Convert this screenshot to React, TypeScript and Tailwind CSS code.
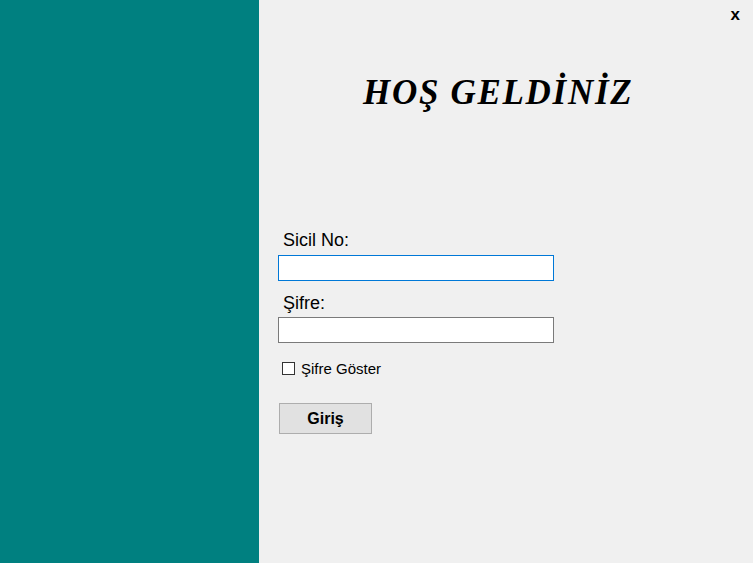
import React, { useState } from 'react';

export default function App() {
  const [sicil, setSicil] = useState('');
  const [sifre, setSifre] = useState('');
  const [goster, setGoster] = useState(false);

  return (
    <div className="flex h-[563px] w-[753px] overflow-hidden bg-[#f0f0f0] font-['Liberation_Sans',Arial,sans-serif] text-black">
      <div className="w-[259px] shrink-0 bg-[#008080]" />
      <div className="relative flex-1">
        <button className="absolute right-[13px] top-[6px] text-[17px] font-bold leading-none">x</button>

        <h1 className="mt-[75px] pl-[104px] font-['Liberation_Serif',serif] text-[35px] font-bold italic leading-none tracking-[1.7px]">
          HOŞ GELDİNİZ
        </h1>

        <div className="mt-[119px] flex flex-col pl-[19px]">
          <label className="pl-[5px] text-[18px] leading-[22px]">Sicil No:</label>
          <input
            autoFocus
            value={sicil}
            onChange={(e) => setSicil(e.target.value)}
            className="mt-[4px] h-[26px] w-[276px] border border-[#0078d7] bg-white px-[2px] text-[15px] outline-none"
          />
          <label className="mt-[11px] pl-[5px] text-[18px] leading-[22px]">Şifre:</label>
          <input
            type={goster ? 'text' : 'password'}
            value={sifre}
            onChange={(e) => setSifre(e.target.value)}
            className="mt-[3px] h-[26px] w-[276px] border border-[#7a7a7a] bg-white px-[2px] text-[15px] outline-none"
          />
          <label className="mt-[18px] flex items-center gap-[6px] pl-[4px] text-[15px] leading-[15px]">
            <span
              onClick={() => setGoster(!goster)}
              className="flex h-[13px] w-[13px] items-center justify-center border border-[#333] bg-white text-[10px]"
            >
              {goster ? '✓' : ''}
            </span>
            <span onClick={() => setGoster(!goster)}>Şifre Göster</span>
          </label>
          <button className="ml-[1px] mt-[27px] h-[31px] w-[93px] border border-[#adadad] bg-[#e1e1e1] text-[16px] font-bold">
            Giriş
          </button>
        </div>
      </div>
    </div>
  );
}
